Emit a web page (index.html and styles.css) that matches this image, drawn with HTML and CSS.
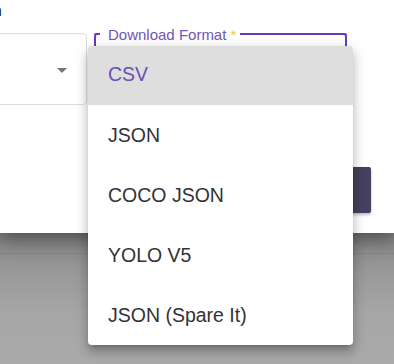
FILE: index.html
```html
<!DOCTYPE html>
<html>
<head>
<meta charset="utf-8">
<link rel="stylesheet" href="styles.css">
</head>
<body>
<div class="dialog">
  <div class="title"><span class="title-text">n</span></div>
  <div class="fields">
    <div class="select select-left">
      <span class="arrow"></span>
    </div>
    <div class="select select-right">
      <span class="label">Download Format <span class="req">*</span></span>
    </div>
  </div>
  <div class="actions">
    <div class="btn"></div>
  </div>
</div>
<div class="backdrop"></div>
<ul class="menu">
  <li class="item active">CSV</li>
  <li class="item">JSON</li>
  <li class="item">COCO JSON</li>
  <li class="item">YOLO V5</li>
  <li class="item">JSON (Spare It)</li>
</ul>
</body>
</html>
```

FILE: styles.css
```css
html, body {
  margin: 0;
  padding: 0;
  width: 394px;
  height: 364px;
  overflow: hidden;
  background: #a8a8a8;
  font-family: "Liberation Sans", Arial, sans-serif;
}
.dialog {
  height: 233px;
  background: #fff;
  position: relative;
  z-index: 1;
  box-shadow: 0 6px 18px rgba(0,0,0,0.35);
}
.title {
  height: 33px;
  overflow: hidden;
}
.title-text {
  display: inline-block;
  margin-left: -8px;
  font-size: 16px;
  font-weight: bold;
  line-height: 20px;
  padding-top: 1px;
  color: #222;
}
.fields {
  display: flex;
  gap: 7px;
  height: 72px;
}
.select {
  box-sizing: border-box;
  height: 72px;
  border-radius: 4px;
  position: relative;
}
.select-left {
  width: 128px;
  margin-left: -41px;
  border: 1px solid #dcdcdc;
  display: flex;
  justify-content: flex-end;
  align-items: center;
}
.arrow {
  width: 0;
  height: 0;
  border-left: 5px solid transparent;
  border-right: 5px solid transparent;
  border-top: 5px solid #757575;
  margin-right: 19px;
  margin-top: 3px;
}
.select-right {
  width: 253px;
  border: 2px solid #673ab7;
  border-top-color: transparent;
}
.select-right::before {
  content: "";
  position: absolute;
  top: -2px;
  right: -2px;
  width: 107px;
  height: 2px;
  background: #673ab7;
  border-top-right-radius: 4px;
}
.select-right::after {
  content: "";
  position: absolute;
  top: -2px;
  left: -2px;
  width: 6px;
  height: 2px;
  background: #673ab7;
  border-top-left-radius: 4px;
}
.label {
  position: absolute;
  top: -9px;
  left: 12px;
  font-size: 15px;
  line-height: 17px;
  color: #7256b9;
  background: #fff;
  padding: 0 3px 0 0;
}
.req {
  color: #f2cb3b;
}
.actions {
  display: flex;
  justify-content: flex-end;
  padding-top: 62px;
  padding-right: 23px;
}
.btn {
  width: 120px;
  height: 46px;
  background: #46415f;
  border-radius: 2px;
  box-shadow: 0 2px 3px rgba(0,0,0,0.25);
}
.backdrop {
  height: 131px;
  background:
    linear-gradient(to bottom, transparent 20px, #838383 20px, #838383 21px, transparent 21px),
    linear-gradient(to bottom, #7c7c7c 0, #8e8e8e 20px, #999 40px, #a6a6a6 80px, #aaa 131px);
}
.menu {
  position: absolute;
  left: 88px;
  top: 46px;
  width: 265px;
  margin: 0;
  padding: 0;
  list-style: none;
  background: #fff;
  border-radius: 4px;
  overflow: hidden;
  z-index: 5;
  box-shadow: 0 5px 5px -3px rgba(0,0,0,0.2), 0 8px 10px 1px rgba(0,0,0,0.14), 0 3px 14px 2px rgba(0,0,0,0.12);
}
.item {
  height: 60px;
  line-height: 60px;
  padding-left: 20px;
  font-size: 19.5px;
  color: #333;
}
.item.active {
  background: #dedede;
  color: #6a4fb5;
  height: 59px;
  line-height: 57px;
}
```
